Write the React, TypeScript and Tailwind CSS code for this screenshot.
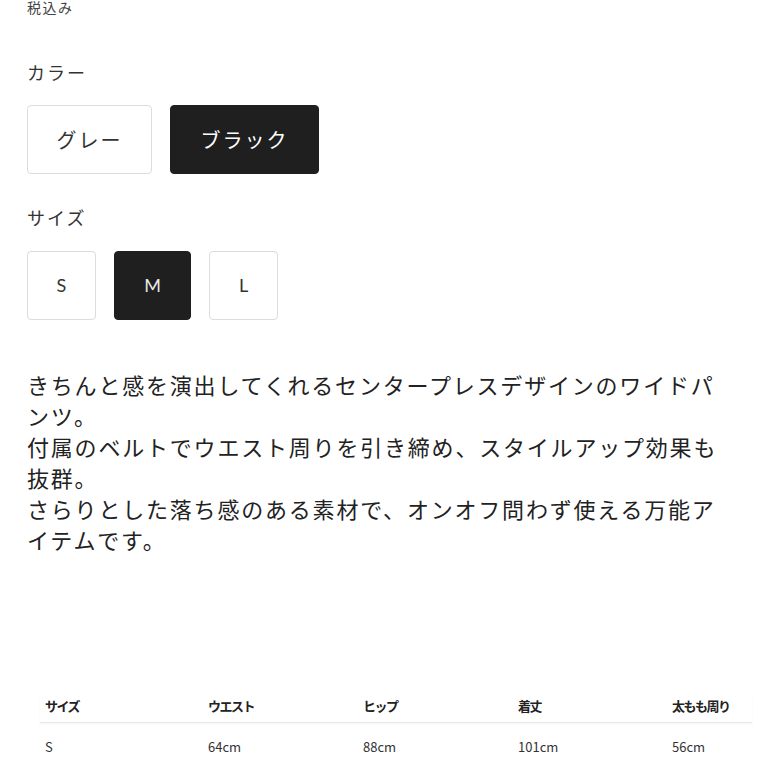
import React from "react";

const colors = [
  { label: "グレー", w: "w-[125px]", active: false },
  { label: "ブラック", w: "w-[149px]", active: true },
];

const sizes = [
  { label: "S", w: "w-[69px]", active: false },
  { label: "M", w: "w-[77px]", active: true },
  { label: "L", w: "w-[69px]", active: false },
];

const headers = ["サイズ", "ウエスト", "ヒップ", "着丈", "太もも周り"];
const rows = [["S", "64cm", "88cm", "101cm", "56cm"]];

export default function App() {
  return (
    <div className="w-[779px] h-[779px] overflow-hidden bg-white text-[#333] font-['Noto_Sans_CJK_JP','Noto_Sans',sans-serif]">
      <div className="px-[27px]">
        <p className="-mt-[3px] text-[14px] leading-[20px] tracking-[1.5px] text-[#444]">税込み</p>

        {/* カラー */}
        <p className="mt-[42px] text-[18px] leading-[26px] tracking-[2px]">カラー</p>
        <div className="mt-[20px] flex gap-[18px]">
          {colors.map((c) => (
            <button
              key={c.label}
              type="button"
              className={`${c.w} h-[69px] rounded-[4px] border text-[20px] tracking-[2px] flex items-center justify-center ${
                c.active ? "bg-[#1f1f1f] border-[#1f1f1f] text-white" : "bg-white border-[#dcdcdc] text-[#333]"
              }`}
            >
              {c.label}
            </button>
          ))}
        </div>

        {/* サイズ */}
        <p className="mt-[30px] text-[18px] leading-[26px] tracking-[2px]">サイズ</p>
        <div className="mt-[21px] flex gap-[18px]">
          {sizes.map((s) => (
            <button
              key={s.label}
              type="button"
              className={`${s.w} h-[69px] rounded-[4px] border text-[18px] font-['Lato',sans-serif] flex items-center justify-center ${
                s.active ? "bg-[#1f1f1f] border-[#1f1f1f] text-[#e8e8e8]" : "bg-white border-[#dcdcdc] text-[#333]"
              }`}
            >
              {s.label}
            </button>
          ))}
        </div>

        {/* description */}
        <p className="mt-[49px] w-[700px] text-[22px] leading-[31px] tracking-[1.8px] text-[#222]">
          きちんと感を演出してくれるセンタープレスデザインのワイドパンツ。
          <br />
          付属のベルトでウエスト周りを引き締め、スタイルアップ効果も抜群。
          <br />
          さらりとした落ち感のある素材で、オンオフ問わず使える万能アイテムです。
        </p>
      </div>

      {/* size table */}
      <div className="mt-[143px] ml-[40px] w-[712px]">
        <div className="grid grid-cols-[163px_155px_155px_154px_1fr] pl-[5px] pb-[8px] border-b border-[#e6e6e6] shadow-[0_1px_2px_rgba(0,0,0,0.04)]">
          {headers.map((h) => (
            <span key={h} className="text-[13px] leading-[16px] font-bold tracking-[-1.5px] text-[#222]">
              {h}
            </span>
          ))}
        </div>
        {rows.map((r) => (
          <div key={r[0]} className="grid grid-cols-[163px_155px_155px_154px_1fr] pl-[5px] pt-[16px]">
            {r.map((v, i) => (
              <span key={i} className="text-[13px] leading-[16px] text-[#333]">
                {v}
              </span>
            ))}
          </div>
        ))}
      </div>
    </div>
  );
}
